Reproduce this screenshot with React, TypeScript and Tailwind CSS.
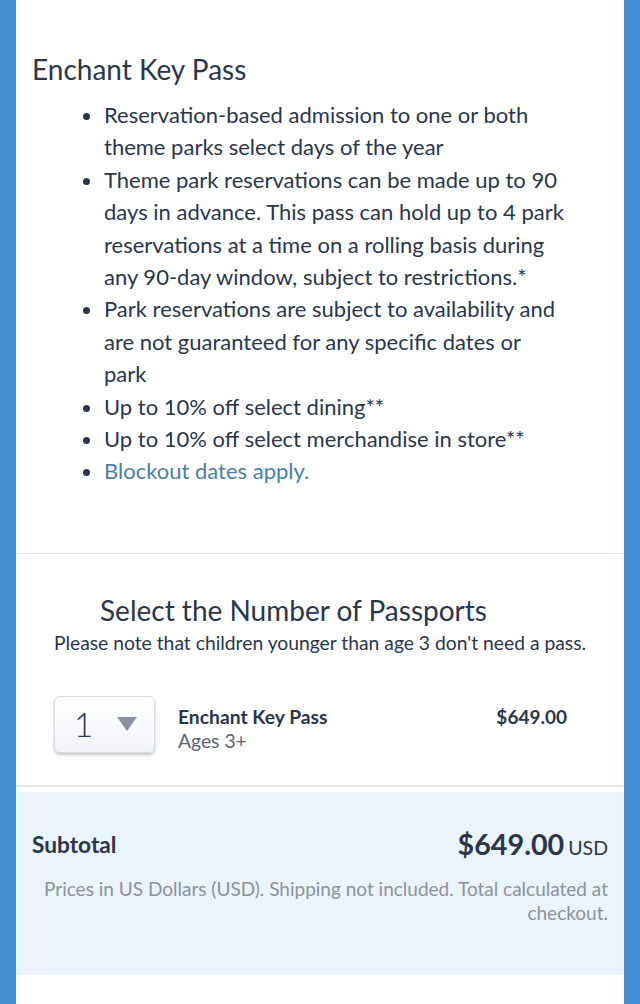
import React from "react";

const bullets: { text: string; link?: boolean }[] = [
  { text: "Reservation-based admission to one or both theme parks select days of the year" },
  { text: "Theme park reservations can be made up to 90 days in advance. This pass can hold up to 4 park reservations at a time on a rolling basis during any 90-day window, subject to restrictions.*" },
  { text: "Park reservations are subject to availability and are not guaranteed for any specific dates or park" },
  { text: "Up to 10% off select dining**" },
  { text: "Up to 10% off select merchandise in store**" },
  { text: "Blockout dates apply.", link: true },
];

export default function App() {
  return (
    <div
      className="w-[640px] h-[1004px] bg-[#4590d2] px-[16px] overflow-hidden"
      style={{ fontFamily: "Lato, 'Open Sans', sans-serif" }}
    >
      <div className="bg-white h-full flex flex-col text-[#2b3649]">
        <section className="pt-[50px] pb-[65px] pl-[16px] pr-[16px]">
          <h2 className="text-[28px] leading-[38px] font-normal text-[#2b3649]">Enchant Key Pass</h2>
          <ul className="mt-[11px] pl-[72px] pr-[43px] list-disc marker:text-[#2b3649] text-[22px] leading-[32.4px]">
            {bullets.map((b, i) => (
              <li key={i} className={b.link ? "text-[#4a7fa8]" : ""}>
                {b.text}
              </li>
            ))}
          </ul>
        </section>
        <div className="h-px bg-[#dfe3e7]" />
        <section className="pt-[38px] pb-[32px]">
          <h3 className="pl-[84px] text-[28px] leading-[36px] text-[#2b3649]">Select the Number of Passports</h3>
          <p className="text-center text-[19.3px] leading-[26px] mt-[2px] text-[#2b3649]">
            Please note that children younger than age 3 don't need a pass.
          </p>
          <div className="flex items-start mt-[40px] pl-[38px] pr-[57px]">
            <div className="w-[101px] h-[57px] rounded-[6px] border border-[#d8dbe0] bg-gradient-to-b from-white to-[#f1f4f9] shadow-[0_2px_3px_rgba(0,0,0,0.22)] flex items-center pl-[19px] gap-[24px]">
              <span className="text-[33px] leading-none text-[#2b3649] font-light">1</span>
              <svg width="20" height="14" viewBox="0 0 20 14">
                <polygon points="0,0 20,0 10,14" fill="#8d91a6" />
              </svg>
            </div>
            <div className="ml-[23px] flex-1 pt-[9px]">
              <div className="text-[19.3px] leading-[24px] font-bold text-[#2b3649]">Enchant Key Pass</div>
              <div className="text-[19.3px] leading-[24px] text-[#5b6475]">Ages 3+</div>
            </div>
            <div className="pt-[9px] text-[19px] leading-[24px] font-bold text-[#2b3649]">$649.00</div>
          </div>
        </section>
        <div className="h-[2px] bg-[#e3e6ea]" />
        <div className="h-[5px] bg-white" />
        <section className="bg-[#ecf4fb] h-[183px] px-[16px] pt-[35px]">
          <div className="flex items-end justify-between">
            <span className="text-[22.7px] leading-[32px] font-bold text-[#2b3649] pb-[1px]">Subtotal</span>
            <span className="flex items-baseline">
              <span className="text-[28.7px] leading-[34px] font-bold text-[#2b3649]">$649.00</span>
              <span className="text-[19.5px] ml-[4px] text-[#2b3649]">USD</span>
            </span>
          </div>
          <p className="mt-[15px] text-right text-[19px] leading-[24px] text-[#8b929d]">
            Prices in US Dollars (USD). Shipping not included. Total calculated at checkout.
          </p>
        </section>
        <div className="flex-1 bg-white" />
      </div>
    </div>
  );
}
